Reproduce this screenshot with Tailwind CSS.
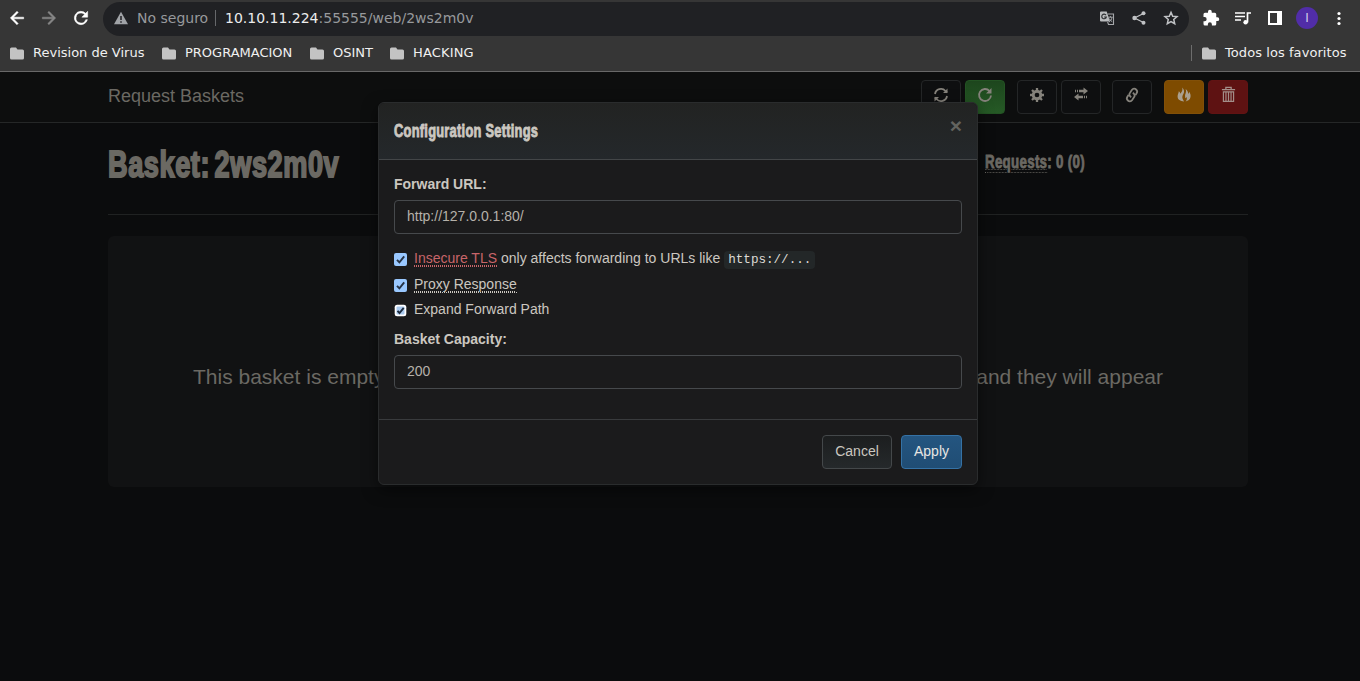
<!DOCTYPE html>
<html lang="es">
<head>
<meta charset="utf-8">
<title>Request Baskets</title>
<script src="https://cdn.jsdelivr.net/npm/@tailwindcss/browser@4"></script>
</head>
<body class="relative flex h-[681px] w-[1360px] flex-col overflow-hidden bg-[#0b0c0d] font-['Liberation_Sans',sans-serif] text-sm">
<!-- Browser toolbar -->
<header class="flex h-[72px] shrink-0 flex-col border-b border-[#686868] bg-[#363636] font-['DejaVu_Sans',sans-serif]">
  <div class="flex h-[36px] items-center">
    <div class="flex w-[103px] items-center gap-[12px] pl-[7px] text-white">
      <svg class="size-5" viewBox="0 0 24 24" fill="currentColor"><path d="M20 11H7.83l5.59-5.59L12 4l-8 8 8 8 1.41-1.41L7.83 13H20z" stroke="currentColor" stroke-width=".6"/></svg>
      <svg class="size-5 text-[#878787]" viewBox="0 0 24 24" fill="currentColor"><path d="M12 4l-1.410 1.410L16.170 11H4v2h12.170l-5.580 5.590L12 20l8-8z" stroke="currentColor" stroke-width=".6"/></svg>
      <svg class="size-5" viewBox="0 0 24 24" fill="currentColor"><path d="M17.650 6.350A8 8 0 1 0 19.730 14h-2.080A6 6 0 1 1 12 6c1.660 0 3.140.69 4.220 1.780L13 11h7V4z" stroke="currentColor" stroke-width=".6"/></svg>
    </div>
    <div class="mt-px flex h-[34px] w-[1086px] items-center rounded-full bg-[#202124] pb-[2px] pl-[10px] text-[14px] text-[#97999c]">
      <svg class="h-4 w-4" viewBox="0 0 16 16"><path d="M8 1.800 15 14.200H1z" fill="#a0a3a7"/><path d="M8 6v4M8 11.200v1.600" stroke="#202124" stroke-width="1.500"/></svg>
      <span class="ml-[8px] w-[72px] whitespace-nowrap">No seguro</span>
      <span class="ml-[6px] h-4 w-px bg-[#66686b]"></span>
      <span class="ml-[9px] whitespace-nowrap"><span class="text-[#eceded]">10.10.11.224</span>:55555/web/2ws2m0v</span>
      <div class="ml-auto flex items-center gap-4 pr-[10px] text-[#c0c2c5]">
        <svg class="size-4" viewBox="0 0 16 16"><path d="M2 1.500h5.700l3.300 10H2a1 1 0 0 1-1-1v-8a1 1 0 0 1 1-1z" fill="#b9bbbd"/><path d="M8.500 4H14.500v10.500H9.500L8.600 12" fill="none" stroke="#a5a7aa" stroke-width="1.100"/><path d="M7 5.200A2.300 2.300 0 1 0 7.300 7H5.100" fill="none" stroke="#303235" stroke-width="1.200"/><path d="M9.300 7.200h4.400M11.400 6v1.200M10 12c1.800-1.100 2.700-2.600 2.900-4.700M10.200 8.500c.7 1.500 1.600 2.400 3 3.200" fill="none" stroke="#a5a7aa"/></svg>
        <svg class="size-4" viewBox="0 0 16 16" fill="currentColor"><path d="M12.500 3.500 3.500 8l9 4.500" fill="none" stroke="currentColor" stroke-width="1.300"/><circle cx="12.500" cy="3.300" r="2"/><circle cx="3.500" cy="8" r="2.200"/><circle cx="12.500" cy="12.700" r="2"/></svg>
        <svg class="size-4" viewBox="0 0 16 16"><path d="M8 2.300l1.700 3.900 4.300.4-3.250 2.850.95 4.250L8 11.500l-3.700 2.200.95-4.250L2 6.600l4.300-.4z" fill="none" stroke="currentColor" stroke-width="1.500"/></svg>
      </div>
    </div>
    <div class="ml-[13px] flex items-center text-white">
      <svg class="size-[18px]" viewBox="0 0 24 24" fill="currentColor"><path d="M20.500 11H19V7a2 2 0 0 0-2-2h-4V3.500a2.500 2.500 0 0 0-5 0V5H4a2 2 0 0 0-2 2v3.800h1.500a2.700 2.700 0 0 1 0 5.400H2V20a2 2 0 0 0 2 2h3.800v-1.500a2.700 2.700 0 0 1 5.400 0V22H17a2 2 0 0 0 2-2v-4h1.500a2.500 2.500 0 0 0 0-5z"/></svg>
      <svg class="ml-[14px] h-[18px] w-[18px]" viewBox="0 0 18 18" fill="none" stroke="currentColor" stroke-width="1.700"><path d="M1 4h10M1 7.500h10M1 11h6M13.500 13.500V4H17"/><circle cx="11.600" cy="13.300" r="2.200" fill="currentColor" stroke="none"/></svg>
      <svg class="ml-[16px] h-[14px] w-[14px]" viewBox="0 0 14 14"><path d="M0 0h14v14H0z" fill="#fff"/><path d="M2 2h7v10H2z" fill="#363636"/></svg>
      <span class="ml-[14px] flex size-[22px] items-center justify-center rounded-full bg-[#512da8] text-xs text-[#d5cbea]">I</span>
      <svg class="ml-[13px] h-4 w-[16px]" viewBox="0 0 16 16" fill="currentColor"><circle cx="8" cy="3.500" r="1.600"/><circle cx="8" cy="8.500" r="1.600"/><circle cx="8" cy="13.500" r="1.600"/></svg>
    </div>
  </div>
  <div class="flex h-[34px] items-center pl-[10px] text-[13px] text-[#f0f0f0]">
    <svg class="h-[13px] w-[14px]" viewBox="0 0 14 13" fill="#c3c3c3"><path d="M1.500.5H6l1.500 2h5A1.500 1.500 0 0 1 14 4v7a1.500 1.500 0 0 1-1.500 1.500h-11A1.500 1.500 0 0 1 0 11V2A1.500 1.500 0 0 1 1.500.5z"/></svg>
    <span class="ml-[9px] w-[129px] whitespace-nowrap">Revision de Virus</span>
    <svg class="h-[13px] w-[14px]" viewBox="0 0 14 13" fill="#c3c3c3"><path d="M1.500.5H6l1.500 2h5A1.500 1.500 0 0 1 14 4v7a1.500 1.500 0 0 1-1.500 1.500h-11A1.500 1.500 0 0 1 0 11V2A1.500 1.500 0 0 1 1.500.5z"/></svg>
    <span class="ml-[9px] w-[125px] whitespace-nowrap">PROGRAMACION</span>
    <svg class="h-[13px] w-[14px]" viewBox="0 0 14 13" fill="#c3c3c3"><path d="M1.500.5H6l1.500 2h5A1.500 1.500 0 0 1 14 4v7a1.500 1.500 0 0 1-1.500 1.500h-11A1.500 1.500 0 0 1 0 11V2A1.500 1.500 0 0 1 1.500.5z"/></svg>
    <span class="ml-[9px] w-[57px] whitespace-nowrap">OSINT</span>
    <svg class="h-[13px] w-[14px]" viewBox="0 0 14 13" fill="#c3c3c3"><path d="M1.500.5H6l1.500 2h5A1.500 1.500 0 0 1 14 4v7a1.500 1.500 0 0 1-1.500 1.500h-11A1.500 1.500 0 0 1 0 11V2A1.500 1.500 0 0 1 1.500.5z"/></svg>
    <span class="ml-[9px] tracking-[.15px]">HACKING</span>
    <span class="ml-auto h-4 w-px bg-[#6d6d6d]"></span>
    <svg class="ml-[10px] h-[13px] w-[14px]" viewBox="0 0 14 13" fill="#c3c3c3"><path d="M1.500.5H6l1.500 2h5A1.500 1.500 0 0 1 14 4v7a1.500 1.500 0 0 1-1.500 1.500h-11A1.500 1.500 0 0 1 0 11V2A1.500 1.500 0 0 1 1.500.5z"/></svg>
    <span class="ml-[9px] w-[135px] tracking-[.07px] whitespace-nowrap">Todos los favoritos</span>
  </div>
</header>

<!-- Dimmed page -->
<nav class="flex h-[51px] shrink-0 items-start border-b border-[#252727] bg-[#0d0e0e] pt-2 pr-[112px] pl-[108px] text-[#6b6963]">
  <span class="mt-1 text-[18px] leading-6">Request Baskets</span>
  <div class="ml-auto flex text-[#85827b]">
    <span class="flex h-[34px] w-10 justify-center rounded border border-[#242627] bg-[#0e0f10] pt-[6px]"><svg class="size-4" viewBox="0 0 16 16" fill="none" stroke="currentColor" stroke-width="1.800"><path d="M2 7a6 6 0 0 1 10.500-3L14 5.500M14 9a6 6 0 0 1-10.500 3L2 10.500"/><path d="M14.500 1.500v4.500H10zM1.500 14.500V10H6z" fill="currentColor" stroke="none"/></svg></span>
    <span class="ml-1 flex h-[34px] w-10 justify-center rounded border border-[#235323] bg-linear-to-b from-[#1d461d] to-[#265a26] pt-[6px]"><svg class="size-4" viewBox="0 0 16 16" fill="none" stroke="currentColor" stroke-width="1.800"><path d="M12.500 4A6 6 0 1 0 14 8.500"/><path d="M14.500 1v5.500H9z" fill="currentColor" stroke="none"/></svg></span>
    <span class="ml-3 flex h-[34px] w-10 justify-center rounded border border-[#242627] bg-[#0e0f10] pt-[6px]"><svg class="size-4" viewBox="0 0 16 16" fill="none" stroke="currentColor"><circle cx="8" cy="8" r="3.800" stroke-width="2.900"/><path d="M8 1v3M8 12v3M1 8h3M12 8h3M3 3l2.200 2.200M10.800 10.800 13 13M3 13l2.200-2.200M10.800 5.200 13 3" stroke-width="2.300"/></svg></span>
    <span class="ml-1 flex h-[34px] w-10 justify-center rounded border border-[#242627] bg-[#0e0f10] pt-[5px]"><svg class="size-4" viewBox="0 0 16 16" fill="currentColor"><path d="M10.500 1.500 15 5l-4.500 3.500V6.200H6V3.800h4.500zM4 3.800h1v2.400H4zM2 3.800h1v2.400H2zM5.500 7.500 1 11l4.500 3.500v-2.300H10V9.800H5.500zM11 9.800h1v2.400h-1zM13 9.800h1v2.400h-1z"/></svg></span>
    <span class="ml-[11px] flex h-[34px] w-10 justify-center rounded border border-[#242627] bg-[#0e0f10] pt-[6px]"><svg class="size-4" viewBox="0 0 16 16" fill="none" stroke="currentColor" stroke-width="1.800"><path d="M7.200 10.200C5.300 9 4.800 7.200 6 5.700l2-2.900a2.700 2.700 0 0 1 4.100-.3c1.300 1.100 1.300 2.700.4 4l-1.200 1.600"/><path d="M8.800 5.800c1.900 1.200 2.400 3 1.200 4.500l-2 2.900a2.700 2.700 0 0 1-4.100.3c-1.300-1.100-1.300-2.700-.4-4l1.200-1.600"/></svg></span>
    <span class="ml-3 flex h-[34px] w-10 justify-center rounded border border-[#825008] bg-[#7e4b00] pt-[6px] text-[#aaa08f]"><svg class="size-4" viewBox="0 0 16 16" fill="currentColor"><path d="M6.300.5c2 2.200 2.300 4.300 1.200 6.300-1 1.800-1.500 3.400-.9 5 .3.900.8 1.600 1.500 2.700C4.300 14.100 1.700 12.500 1.600 9.700c-.1-1.900 1-3.200 1.200-5.400.9.600 1.300 1.300 1.500 2.400C6 5 6.800 3 6.300.5zM9.600 2c2.200 1.700 2.500 3.300 2.600 5 .6-.6.9-1.300.9-2.300 1.300 1.700 1.700 3.500 1.400 5.400-.4 2.500-2.300 3.900-4.900 4.400 1.300-1.700 1.600-3.100.9-4.600-.4.700-.7 1-1.300 1.300.1-1.600-.5-2.700.2-4.200C10 5.300 10.400 3.900 9.600 2z"/></svg></span>
    <span class="ml-1 flex h-[34px] w-10 justify-center rounded border border-[#611313] bg-[#5e1212] pt-[5px] text-[#a38e89]"><svg class="size-[17px]" viewBox="0 0 16 16" fill="none" stroke="currentColor"><path d="M1.800 3.500h12.400M5.500 3V1.200h5V3" stroke-width="1.200"/><path d="M3.200 5.500h9.600v9H3.200zM5.600 5.500v9M8 5.500v9M10.400 5.500v9" stroke-width="1.100"/></svg></span>
  </div>
</nav>
<main class="pr-[112px] pl-[108px] text-[#6b6963]">
  <div class="flex h-[92px] border-b border-[#202222]">
    <h1 class="mt-[20px] w-[877px] text-[37px] leading-[44px] font-bold"><span class="inline-block origin-left scale-x-[0.733] tracking-[.8px] [word-spacing:-5px] whitespace-nowrap [-webkit-text-stroke:2px_#6b6963]">Basket: 2ws2m0v</span></h1>
    <h4 class="mt-[27px] text-[18px] leading-6 font-bold"><span class="inline-block origin-left scale-x-[0.740] tracking-[.4px] whitespace-nowrap [-webkit-text-stroke:.8px_#6b6963]"><span class="border-b border-dotted border-[#6b6963] underline decoration-dotted decoration-1 underline-offset-1">Requests</span>: 0 (0)</span></h4>
  </div>
  <section class="mt-[21px] flex h-[251px] justify-between rounded-md bg-[#111213] pt-[126px] pr-[85px] pl-[85px] text-[21px] leading-[30px]">
    <span>This basket is empty</span><span>and they will appear</span>
  </section>
</main>

<!-- Settings dialog -->
<div role="dialog" class="absolute top-[102px] left-[378px] flex h-[383px] w-[600px] flex-col rounded-md border border-[#2a2c2d] bg-[#1b1b1c] text-[#cbc7c0] shadow-[0_5px_15px_rgba(0,0,0,0.5)]">
  <div class="flex h-[57px] shrink-0 justify-between rounded-t-md border-b border-[#434648] bg-linear-to-b from-[#222322] to-[#24282b] px-[15px]">
    <h4 class="mt-4 text-[18px] leading-6 font-bold"><span class="inline-block origin-left scale-x-[0.715] tracking-[.35px] whitespace-nowrap [-webkit-text-stroke:.9px_#cbc7c0]">Configuration Settings</span></h4>
    <span class="mt-[11px] text-[21px] leading-6 font-bold text-[#62635f]">×</span>
  </div>
  <div class="flex h-[260px] shrink-0 flex-col border-b border-[#393b3d] px-[15px] pt-[14px]">
    <label class="leading-5 font-bold">Forward URL:</label>
    <div class="mt-[6px] h-[34px] rounded border border-[#46494c] px-3 leading-[30px] text-[#b5b1aa]">http://127.0.0.1:80/</div>
    <div class="mt-[14px] flex h-5 items-center">
      <svg class="mt-[3px] mr-[7px] size-[13px]" viewBox="0 0 13 13"><rect width="13" height="13" rx="2" fill="#99c8ff"/><path d="m3 6.800 2.400 2.600 4.800-6" fill="none" stroke="#253244" stroke-width="1.900"/></svg>
      <span class="h-[18px] border-b border-dotted border-[#ca666b] leading-[18px] text-[#c86569] underline decoration-dotted decoration-1 underline-offset-2">Insecure TLS</span><span class="ml-1">only affects forwarding to URLs like</span>
      <code class="mt-[3px] ml-[4px] rounded bg-[#232728] px-1 py-0.5 font-['Liberation_Mono',monospace] text-[12.600px] leading-[14px] text-[#dedbd5]">https://...</code>
    </div>
    <div class="mt-[6px] flex h-5 items-center">
      <svg class="mt-[3px] mr-[7px] size-[13px]" viewBox="0 0 13 13"><rect width="13" height="13" rx="2" fill="#99c8ff"/><path d="m3 6.800 2.400 2.600 4.800-6" fill="none" stroke="#253244" stroke-width="1.900"/></svg>
      <span class="h-[18px] border-b border-dotted border-[#cbc7c0] leading-[18px] underline decoration-dotted decoration-1 underline-offset-2">Proxy Response</span>
    </div>
    <div class="mt-[5px] flex h-5 items-center">
      <svg class="mt-[3px] mr-[7px] size-[13px]" viewBox="0 0 13 13"><rect x=".7" y=".7" width="11.600" height="11.600" rx="2.500" fill="#fff"/><rect x="2.500" y="2.500" width="8" height="8" rx="1" fill="#a9c9ee"/><path d="m3.500 6.800 2 2.200 4.200-5.200" fill="none" stroke="#1d2c3f" stroke-width="1.900"/></svg>
      <span>Expand Forward Path</span>
    </div>
    <label class="mt-[10px] leading-5 font-bold">Basket Capacity:</label>
    <div class="mt-[6px] h-[34px] rounded border border-[#46494c] px-3 leading-[30px] text-[#b5b1aa]">200</div>
  </div>
  <div class="flex justify-end gap-[9px] px-[15px] pt-[15px]">
    <button class="h-[34px] w-[70px] rounded border border-[#44484a] bg-linear-to-b from-[#1c1e1f] to-[#25292b]"><span class="block pb-[2px] leading-[30px]">Cancel</span></button>
    <button class="h-[34px] w-[61px] rounded border border-[#3572a5] bg-linear-to-b from-[#245580] to-[#204d74] text-[#e8e6e3]"><span class="block pb-[2px] leading-[30px]">Apply</span></button>
  </div>
</div>
</body>
</html>
